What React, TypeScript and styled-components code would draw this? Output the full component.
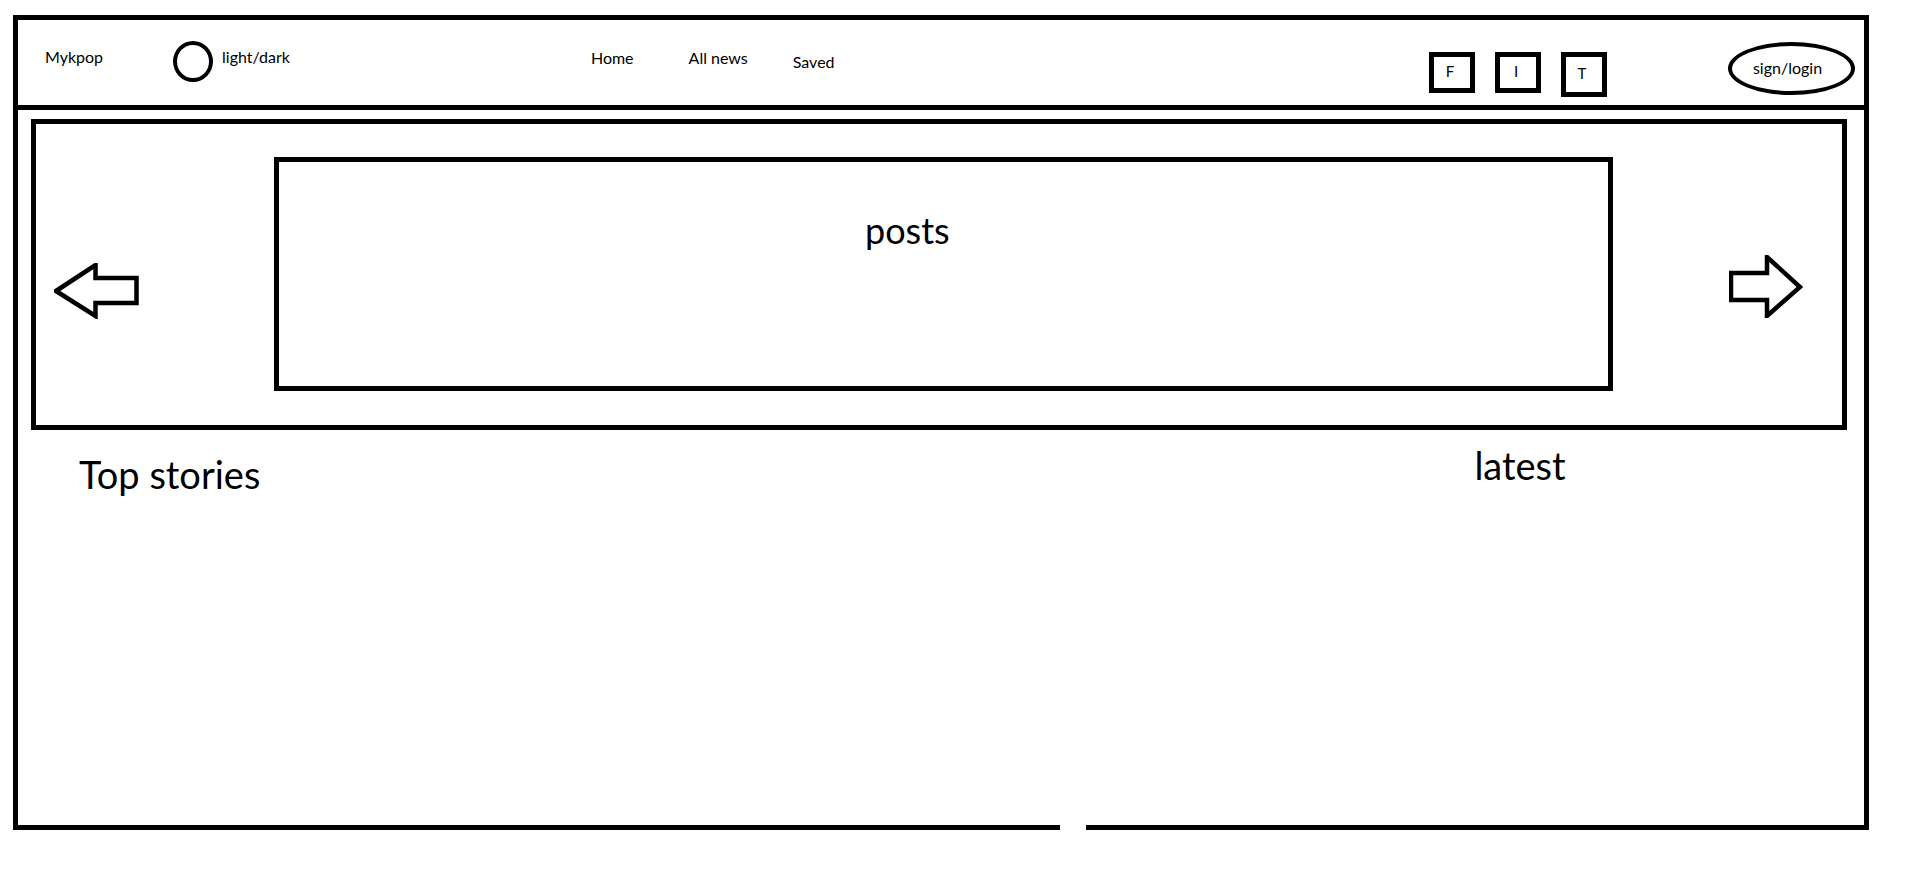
import React from 'react';
import styled, { createGlobalStyle } from 'styled-components';

const GlobalStyle = createGlobalStyle`
  html, body {
    margin: 0;
    padding: 0;
    background: #fff;
  }
  body {
    font-family: Lato, "Open Sans", sans-serif;
    color: #000;
  }
`;

const Frame = styled.div`
  position: relative;
  box-sizing: border-box;
  width: 1856px;
  height: 815px;
  margin: 15px 0 0 13px;
  border: 5px solid #000;

  /* little gap in the bottom stroke of the sketch */
  &::after {
    content: '';
    position: absolute;
    left: 1042px;
    bottom: -5px;
    width: 26px;
    height: 5px;
    background: #fff;
  }
`;

const Header = styled.header`
  display: flex;
  align-items: flex-start;
  height: 85px;
  padding: 0 9px 0 27px;
  border-bottom: 5px solid #000;
`;

const Label = styled.span<{ $top: number; $left?: number }>`
  margin-top: ${(p) => p.$top}px;
  margin-left: ${(p) => p.$left ?? 0}px;
  font-size: 16px;
  line-height: 20px;
  white-space: nowrap;
`;

const ToggleCircle = styled.span`
  box-sizing: border-box;
  width: 40px;
  height: 41px;
  margin: 21px 0 0 70px;
  border: 4px solid #000;
  border-radius: 50%;
`;

const Nav = styled.nav`
  display: flex;
  align-items: flex-start;
  margin-left: 301px;
`;

const Socials = styled.div`
  display: flex;
  gap: 20px;
  margin: 32px 0 0 auto;
`;

const SocialBox = styled.span<{ $tall?: boolean }>`
  box-sizing: border-box;
  display: flex;
  align-items: center;
  justify-content: center;
  width: 46px;
  height: ${(p) => (p.$tall ? 45 : 41)}px;
  padding: 0 4px 3px 0;
  border: 5px solid #000;
  font-size: 15px;
`;

const SignIn = styled.span`
  box-sizing: border-box;
  display: flex;
  align-items: center;
  justify-content: center;
  width: 127px;
  height: 53px;
  margin: 22px 0 0 121px;
  padding: 0 8px 2px 0;
  border: 4px solid #000;
  border-radius: 50%;
  font-size: 16px;
`;

const Main = styled.main`
  padding: 9px 17px 0 13px;
`;

const Carousel = styled.section`
  box-sizing: border-box;
  display: flex;
  align-items: flex-start;
  height: 311px;
  border: 5px solid #000;
`;

const Arrow = styled.svg<{ $top: number; $left: number }>`
  flex: none;
  margin-top: ${(p) => p.$top}px;
  margin-left: ${(p) => p.$left}px;
`;

const Posts = styled.div`
  box-sizing: border-box;
  width: 1339px;
  height: 234px;
  margin: 33px 0 0 135px;
  padding: 47px 0 0 586px;
  border: 5px solid #000;
  font-size: 36px;
  line-height: 1.2;
`;

const Sections = styled.div`
  display: flex;
  align-items: flex-start;
`;

const SectionTitle = styled.h2<{ $top: number; $left: number }>`
  margin: ${(p) => p.$top}px 0 0 ${(p) => p.$left}px;
  font-size: 38px;
  font-weight: 400;
  line-height: 1.2;
`;

export default function App() {
  return (
    <>
      <GlobalStyle />
      <Frame>
        <Header>
          <Label $top={27}>Mykpop</Label>
          <ToggleCircle />
          <Label $top={27} $left={9}>light/dark</Label>
          <Nav>
            <Label $top={28}>Home</Label>
            <Label $top={28} $left={55}>All news</Label>
            <Label $top={32} $left={45}>Saved</Label>
          </Nav>
          <Socials>
            <SocialBox>F</SocialBox>
            <SocialBox>I</SocialBox>
            <SocialBox $tall>T</SocialBox>
          </Socials>
          <SignIn>sign/login</SignIn>
        </Header>
        <Main>
          <Carousel>
            <Arrow $top={139} $left={18} width="85" height="56" viewBox="0 0 85 56">
              <polygon
                points="2,28 41.5,2 41.5,15 82.5,15 82.5,40 41.5,40 41.5,53"
                fill="none"
                stroke="#000"
                strokeWidth="4.5"
                strokeLinejoin="miter"
              />
            </Arrow>
            <Posts>posts</Posts>
            <Arrow $top={131} $left={116} width="74" height="63" viewBox="0 0 74 63">
              <polygon
                points="2,18 38,18 38,2 71,32 38,61 38,45 2,45"
                fill="none"
                stroke="#000"
                strokeWidth="4.5"
                strokeLinejoin="miter"
              />
            </Arrow>
          </Carousel>
          <Sections>
            <SectionTitle $top={22} $left={48}>Top stories</SectionTitle>
            <SectionTitle $top={13} $left={1214}>latest</SectionTitle>
          </Sections>
        </Main>
      </Frame>
    </>
  );
}
